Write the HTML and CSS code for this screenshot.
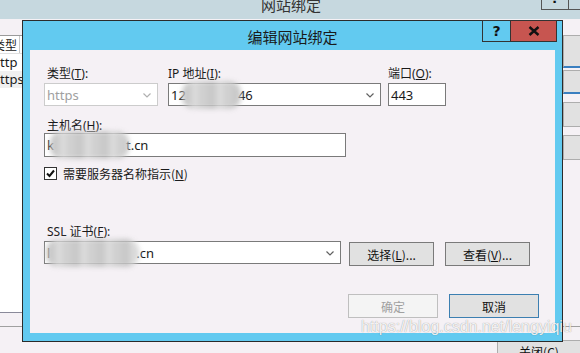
FILE: index.html
```html
<!DOCTYPE html>
<html lang="zh-CN">
<head>
    <meta charset="UTF-8">
    <title>编辑网站绑定</title>
    <link rel="stylesheet" href="styles.css">
</head>
<body>

<div class="desk">

    <div class="bgwin">
        <div class="bg-title">
            <span class="bg-title-text">网站绑定</span>
            <div class="bg-tbtns">
                <span class="bg-help">?</span>
                <span class="bg-close"></span>
            </div>
        </div>
        <div class="bg-body">
            <div class="bg-list">
                <div class="bg-head"><span>类型</span></div>
                <div class="bg-row">http</div>
                <div class="bg-row sel">https</div>
            </div>
            <div class="bg-side">
                <div class="bg-btn b1">添加(A)...</div>
                <div class="bg-btn b2">编辑(E)...</div>
                <div class="bg-btn b3">删除(R)</div>
                <div class="bg-btn b4">浏览(B)</div>
            </div>
        </div>
        <div class="bg-foot">
            <div class="bg-btn foot">关闭(C)</div>
        </div>
    </div>

    <div class="dialog">
        <div class="dlg-title">
            <span>编辑网站绑定</span>
            <div class="tbtns">
                <span class="tbtn help">?</span>
                <span class="tbtn close">
                    <svg width="12" height="10" viewBox="0 0 12 10"><path d="M1.5 1 L10.5 9 M10.5 1 L1.5 9" stroke="#111" stroke-width="2.4"/></svg>
                </span>
            </div>
        </div>

        <div class="dlg-body">
            <div class="row-top">
                <div class="field type">
                    <label>类型(<u>T</u>):</label>
                    <div class="box select disabled">
                        <span class="val">https</span>
                        <svg class="chev" width="8" height="5" viewBox="0 0 8 5"><path d="M0.5 0.5 L4 4 L7.5 0.5" fill="none" stroke="#b0b0b0" stroke-width="1.2"/></svg>
                    </div>
                </div>
                <div class="field ip">
                    <label>IP 地址(<u>I</u>):</label>
                    <div class="box select">
                        <span class="val">12<span class="smudge ip"></span>46</span>
                        <svg class="chev" width="8" height="5" viewBox="0 0 8 5"><path d="M0.5 0.5 L4 4 L7.5 0.5" fill="none" stroke="#606060" stroke-width="1.2"/></svg>
                    </div>
                </div>
                <div class="field port">
                    <label>端口(<u>O</u>):</label>
                    <div class="box"><span class="val">443</span></div>
                </div>
            </div>

            <label class="lbl-host">主机名(<u>H</u>):</label>
            <div class="box host"><span class="val">k<span class="smudge hostname"></span>t.cn</span></div>

            <div class="check-row">
                <span class="check">
                    <svg width="11" height="11" viewBox="0 0 11 11"><path d="M2 5.5 L4.5 8 L9 2.5" fill="none" stroke="#111" stroke-width="2"/></svg>
                </span>
                <span>需要服务器名称指示(<u>N</u>)</span>
            </div>

            <label class="lbl-ssl">SSL 证书(<u>F</u>):</label>
            <div class="ssl-row">
                <div class="box select ssl">
                    <span class="val">l<span class="smudge cert"></span>.cn</span>
                    <svg class="chev" width="8" height="5" viewBox="0 0 8 5"><path d="M0.5 0.5 L4 4 L7.5 0.5" fill="none" stroke="#606060" stroke-width="1.2"/></svg>
                </div>
                <button class="btn">选择(<u>L</u>)...</button>
                <button class="btn">查看(<u>V</u>)...</button>
            </div>

            <div class="actions">
                <button class="btn wide off">确定</button>
                <button class="btn wide default">取消</button>
            </div>
        </div>
    </div>

    <div class="watermark">https://blog.csdn.net/lengyiqiu</div>

</div>

</body>
</html>
```

FILE: styles.css
```css
body {
    margin: 0;
    font-family: "Noto Sans", "Noto Sans CJK SC", sans-serif;
    font-size: 12px;
    color: #1a1a1a;
}

.desk {
    position: relative;
    width: 580px;
    height: 353px;
    overflow: hidden;
    background-color: #f5f1f5;
}

/* window behind the dialog */
.bgwin {
    display: flex;
    flex-direction: column;
    height: 100%;
}

.bg-title {
    position: relative;
    height: 31px;
    margin-top: -12px;
    background-color: #c6d8df;
    display: flex;
    align-items: center;
    justify-content: center;
    font-family: "Noto Sans CJK SC", sans-serif;
    font-size: 15px;
    color: #333;
}

.bg-title-text {
    margin-top: 2px;
    margin-left: 2px;
}

.bg-tbtns {
    position: absolute;
    right: -20px;
    top: 0;
    height: 22px;
    display: flex;
}

.bg-help, .bg-close {
    border: 1px solid #555;
    border-top: none;
    height: 22px;
    box-sizing: border-box;
}

.bg-help {
    width: 28px;
    text-align: center;
    font-family: "DejaVu Sans", sans-serif;
    font-weight: bold;
    font-size: 13px;
    line-height: 21px;
    color: #111;
}

.bg-close {
    width: 31px;
    border-left: none;
}

.bg-body {
    display: flex;
    justify-content: space-between;
    margin-top: 16px;
}

.bg-list {
    width: 470px;
    height: 276px;
    margin-left: -9px;
    background: #fff;
    border-top: 1px solid #9a9a9a;
    border-bottom: 1px solid #8a8a9a;
}

.bg-head {
    height: 17px;
    border-bottom: 1px solid #e0e0e0;
    line-height: 17px;
    font-family: "Noto Sans CJK SC", sans-serif;
}

.bg-head span {
    display: inline-block;
    padding-right: 2px;
    border-right: 1px solid #c8c8c8;
    margin-left: 2px;
}

.bg-row {
    height: 17px;
    line-height: 17px;
    padding-left: 1px;
    font-size: 13px;
}

.bg-row.sel {
    background: #f0f0f0;
}

.bg-side {
    width: 90px;
    display: flex;
    flex-direction: column;
    margin-right: -73px;
}

.bg-btn {
    background: #e1e1e1;
    border: 1px solid #adadad;
    box-sizing: border-box;
    text-align: center;
    font-family: "Noto Sans CJK SC", sans-serif;
    line-height: 22px;
    color: #111;
}

.bg-btn.b1 { height: 33px; border-bottom: 2px solid #3a7fc0; line-height: 28px; }
.bg-btn.b2 { height: 24px; margin-top: 2px; border-bottom: 2px solid #3a7fc0; }
.bg-btn.b3 { height: 25px; margin-top: 8px; }
.bg-btn.b4 { height: 25px; margin-top: 8px; }

.bg-foot {
    margin-top: auto;
    height: 26px;
    border-top: 1px solid #a0a0a0;
    display: flex;
    justify-content: flex-end;
}

.bg-btn.foot {
    width: 84px;
    height: 24px;
    margin-top: 13px;
    margin-right: -1px;
}

/* dialog */
.dialog {
    position: absolute;
    left: 22px;
    top: 20px;
    width: 541px;
    height: 322px;
    box-sizing: border-box;
    border: 1px solid #2b2b2b;
    background-color: #62caf0;
    display: flex;
    flex-direction: column;
}

.dlg-title {
    position: relative;
    height: 29px;
    display: flex;
    align-items: center;
    justify-content: center;
    font-family: "Noto Sans CJK SC", sans-serif;
    font-size: 15px;
    color: #1a1a1a;
}

.dlg-title > span {
    margin-top: 1px;
}

.tbtns {
    position: absolute;
    top: -1px;
    right: 5px;
    display: flex;
}

.tbtn {
    height: 22px;
    box-sizing: border-box;
    border: 1px solid #333;
    display: flex;
    align-items: center;
    justify-content: center;
}

.tbtn.help {
    width: 29px;
    font-family: "DejaVu Sans", sans-serif;
    font-weight: bold;
    font-size: 14px;
    color: #111;
}

.tbtn.close {
    width: 47px;
    margin-left: -1px;
    background-color: #c75550;
}

.dlg-body {
    flex: 1;
    margin: 0 7px 8px 7px;
    background-color: #f5f1f5;
    padding: 16px 0 0 14px;
    font-family: "Noto Sans", "Noto Sans CJK SC", sans-serif;
}

label {
    display: block;
    line-height: 15px;
    margin-left: 3px;
}

.row-top {
    display: flex;
}

.field.type { width: 114px; }
.field.ip { width: 213px; margin-left: 10px; }
.field.port { width: 58px; margin-left: 7px; }

.field.ip label,
.field.port label {
    margin-left: 0;
}

.row-top label {
    margin-bottom: 2px;
}

.box {
    position: relative;
    height: 23px;
    box-sizing: border-box;
    border: 1px solid #7a7a7a;
    background: #fff;
    display: flex;
    align-items: center;
    padding-left: 2px;
    font-size: 13px;
}

.box .val {
    display: flex;
    align-items: center;
}

.box.disabled {
    border-color: #cccccc;
    color: #a0a0a0;
}

.chev {
    position: absolute;
    right: 6px;
    top: 9px;
}

.smudge {
    display: inline-block;
    position: relative;
    height: 14px;
}

.smudge::before {
    content: "";
    position: absolute;
    left: -4px;
    right: -3px;
    top: -7px;
    bottom: -7px;
    border-radius: 12px;
    background: repeating-linear-gradient(90deg, #c4c4c4 0 9px, #d6d6d6 9px 17px, #cbcbcb 17px 25px);
    filter: blur(2.5px);
    opacity: 0.9;
}

.smudge.ip { width: 52px; }
.smudge.hostname { width: 72px; }
.smudge.cert { width: 86px; }

.lbl-host {
    margin-top: 12px;
}

.box.host {
    width: 302px;
    height: 24px;
}

.check-row {
    display: flex;
    align-items: center;
    margin-top: 10px;
    height: 13px;
    font-family: "Noto Sans CJK SC", sans-serif;
}

.check {
    width: 13px;
    height: 13px;
    box-sizing: border-box;
    border: 1px solid #333;
    background: #fff;
    display: flex;
    align-items: center;
    justify-content: center;
    margin-right: 6px;
}

.lbl-ssl {
    margin-top: 44px;
    margin-bottom: 2px;
}

.ssl-row {
    display: flex;
    align-items: flex-start;
}

.box.ssl {
    width: 297px;
}

.btn {
    width: 85px;
    height: 24px;
    margin-top: 1px;
    background: #e1e1e1;
    border: 1px solid #7a7a7a;
    font-family: "Noto Sans CJK SC", sans-serif;
    font-size: 12px;
    color: #111;
    padding: 0;
}

.ssl-row .btn {
    margin-left: 8px;
}

.ssl-row .btn:last-child {
    margin-left: 11px;
}

.actions {
    display: flex;
    gap: 11px;
    margin-top: 27px;
    margin-left: 304px;
}

.btn.wide {
    width: 90px;
}

.btn.off {
    background: #f4f4f4;
    border-color: #bfbfbf;
    color: #a0a0a0;
}

.btn.default {
    border-color: #3c7fb1;
}

.watermark {
    position: absolute;
    left: 361px;
    top: 318px;
    font-family: "Liberation Sans", sans-serif;
    font-size: 16px;
    color: rgba(255, 255, 255, 0.9);
    text-shadow: 0 0 1px rgba(0, 0, 0, 0.45);
}
```
